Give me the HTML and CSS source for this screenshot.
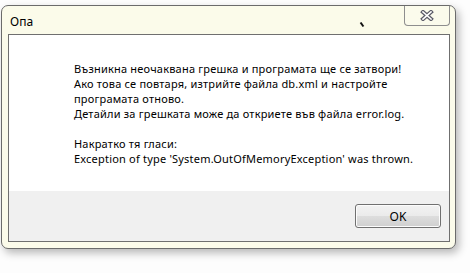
FILE: index.html
```html
<!DOCTYPE html>
<html lang="bg">
<head>
  <meta charset="UTF-8" />
  <title>Опа</title>
  <link rel="stylesheet" href="styles.css">
</head>
<body>
  <div class="window">
    <div class="title-bar">
      <span class="title">Опа</span>
      <button class="close-btn" aria-label="Затвори">
        <svg width="14" height="11" viewBox="0 0 14 11">
          <path d="M3 2 L11 9 M11 2 L3 9" stroke="#5a5a66" stroke-width="4" stroke-linecap="square" fill="none"/>
          <path d="M3 2 L11 9 M11 2 L3 9" stroke="#ffffff" stroke-width="1.6" stroke-linecap="square" fill="none"/>
        </svg>
      </button>
      <span class="cursor-mark"></span>
    </div>
    <div class="client">
      <div class="message">
        <p>Възникна неочаквана грешка и програмата ще се затвори!<br>
        Ако това се повтаря, изтрийте файла db.xml и настройте<br>
        програмата отново.<br>
        Детайли за грешката може да откриете във файла error.log.</p>
        <p>Накратко тя гласи:<br>
        Exception of type 'System.OutOfMemoryException' was thrown.</p>
      </div>
      <div class="footer">
        <button class="ok-btn">OK</button>
      </div>
    </div>
  </div>
</body>
</html>
```

FILE: styles.css
```css
* { box-sizing: border-box; }
body {
  margin: 0;
  width: 470px;
  height: 273px;
  background: #fdfdfd;
  font-family: "Noto Sans", "Open Sans", sans-serif;
  font-size: 11px;
  letter-spacing: 0.2px;
  color: #000;
  overflow: hidden;
}
.window {
  margin: 5px 0 0 1px;
  width: 455px;
  height: 244px;
  border: 1px solid #6b6b6b;
  border-radius: 7px;
  background: #fbfbea;
  padding: 0 5px 6px 6px;
  display: flex;
  flex-direction: column;
  box-shadow: 3px 4px 9px rgba(0, 0, 0, 0.28);
}
.title-bar {
  position: relative;
  height: 28px;
  display: flex;
  justify-content: space-between;
  align-items: flex-start;
}
.title {
  margin: 8px 0 0 2px;
  font-size: 12px;
  letter-spacing: 0;
  line-height: 15px;
}
.close-btn {
  width: 46px;
  height: 20px;
  margin: 0;
  padding: 0;
  border: 1px solid #8e8e8e;
  border-top: none;
  border-radius: 0 0 4px 4px;
  background: #fbfbec;
  display: flex;
  align-items: center;
  justify-content: center;
}
.cursor-mark {
  position: absolute;
  left: 353px;
  top: 16px;
  width: 2px;
  height: 5px;
  background: #111;
  transform: rotate(-35deg);
}
.client {
  flex: 1;
  border: 1px solid #6f6f6f;
  background: #fff;
  display: flex;
  flex-direction: column;
}
.message {
  flex: 1;
  padding: 26px 0 0 65px;
  line-height: 15px;
}
.message p {
  margin: 0 0 15px 0;
}
.footer {
  height: 50px;
  background: #f0f0f0;
  display: flex;
  justify-content: flex-end;
  align-items: flex-start;
  padding: 13px 8px 0 0;
}
.ok-btn {
  width: 86px;
  height: 24px;
  border: 1px solid #707070;
  border-radius: 3px;
  background: linear-gradient(#f2f2f2 0%, #ebebeb 48%, #dddddd 52%, #cfcfcf 100%);
  box-shadow: inset 0 0 0 1px #fcfcfc;
  font-family: "Noto Sans", "Open Sans", sans-serif;
  font-size: 12px;
  color: #000;
  padding: 0;
}
```
